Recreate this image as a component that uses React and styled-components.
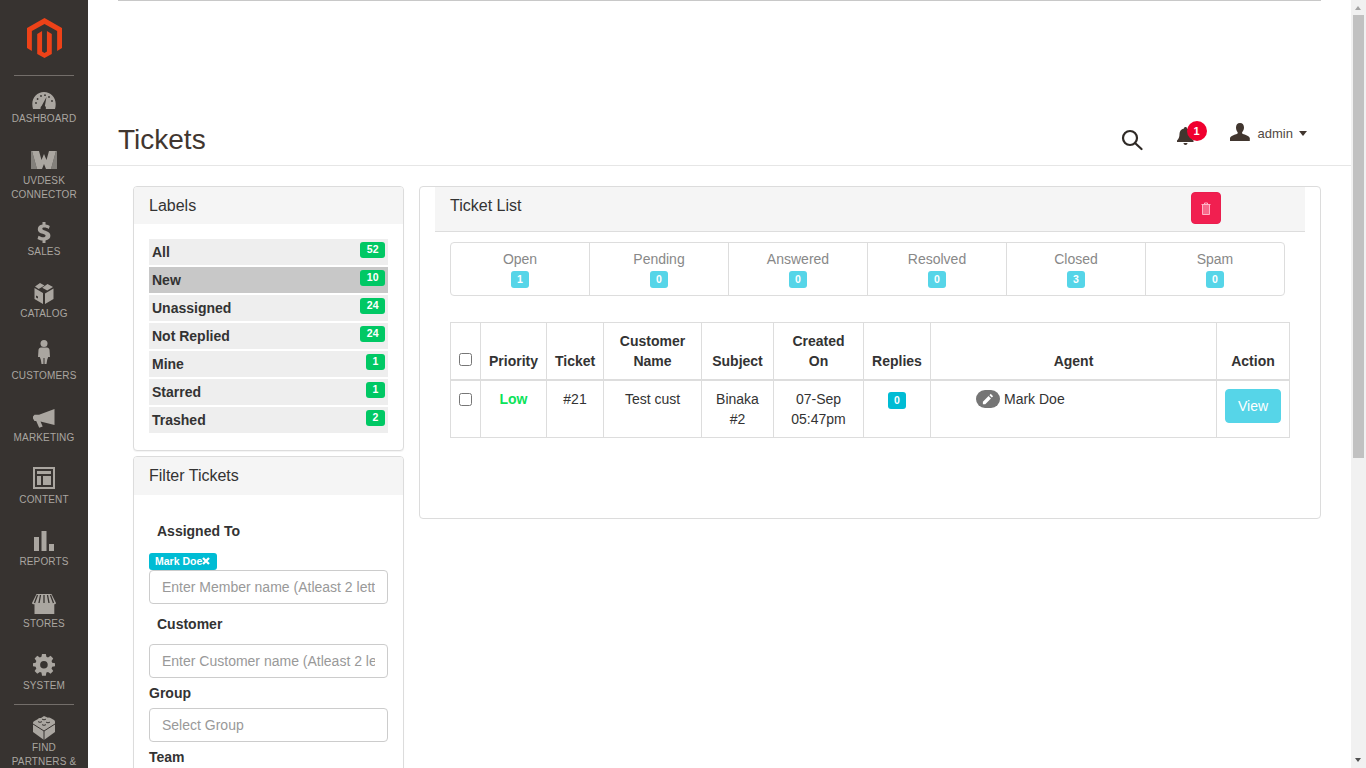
import React from 'react';
import styled, { createGlobalStyle } from 'styled-components';

const Global = createGlobalStyle`
  html, body { margin: 0; padding: 0; height: 768px; overflow: hidden; background: #fff; }
  * { box-sizing: border-box; }
  body { font-family: "Liberation Sans", Arial, sans-serif; font-size: 14px; color: #333; }
`;

const Page = styled.div`display: flex; width: 1366px; height: 768px; overflow: hidden;`;
const Sidebar = styled.nav`
  width: 88px; flex: none; height: 768px; background: #373330; overflow: hidden;
  display: flex; flex-direction: column; align-items: center;
`;
const Logo = styled.div`height: 76px; width: 60px; flex: none; display: flex; justify-content: center; padding-top: 18px; border-bottom: 1px solid #736e6a;`;
const NavItem = styled.a`
  flex: none; width: 88px; display: flex; flex-direction: column; align-items: center;
  height: ${p => p.$h}px; padding-top: ${p => p.$pt}px;
  color: #aaa6a0; font-size: 10px; line-height: 14px; letter-spacing: .15px; text-align: center; text-transform: uppercase;
  font-family: "Liberation Sans", sans-serif;
  svg { display: block; margin-bottom: ${p => p.$gap}px; flex: none; }
`;
const Divider = styled.div`width: 60px; height: 1px; background: #736e6a; flex: none; margin-top: 4px;`;

const Main = styled.main`flex: 1; min-width: 0; height: 768px; overflow: hidden; display: flex; flex-direction: column;`;
const TopRule = styled.div`height: 1px; margin: 0 31px 0 30px; background: #c8c8c8; flex: none;`;
const Header = styled.header`
  height: 165px; flex: none; border-bottom: 1px solid #e6e6e6; display: flex; align-items: flex-start; padding: 121px 0 0 30px; position: relative;
`;
const Title = styled.h1`margin: 0; font-size: 28px; line-height: 36px; font-weight: 400; color: #41362f; flex: 1;`;
const HeadActions = styled.div`display: flex; align-items: flex-start; height: 24px;`;
const SearchWrap = styled.span`display: flex; margin: 7px 0 0 0; width: 22px;`;
const BellWrap = styled.span`position: relative; display: flex; margin: 5px 0 0 34px; width: 19px;`;
const BellBadge = styled.span`
  position: absolute; left: 10px; top: -6px; width: 20px; height: 20px; border-radius: 50%; background: #f0002f; color: #fff;
  font-size: 11px; font-weight: 700; display: flex; align-items: center; justify-content: center;
`;
const UserWrap = styled.span`display: flex; align-items: center; height: 20px; margin: 1px 45px 0 34px; font-size: 13px; color: #514943; gap: 8px; svg { margin-top: -2px; }`;
const Caret = styled.span`width: 0; height: 0; border-left: 4px solid transparent; border-right: 4px solid transparent; border-top: 5px solid #41362f; margin-left: -2px;`;

const Content = styled.div`flex: 1; display: flex; align-items: flex-start; padding: 20px 0 0 45px; gap: 15px;`;
const LeftCol = styled.div`width: 271px; flex: none; display: flex; flex-direction: column; gap: 5px;`;
const Card = styled.section`border: 1px solid #dcdcdc; border-radius: 4px; background: #fff; box-shadow: 0 1px 1px rgba(0,0,0,.05);`;
const CardHead = styled.div`height: ${p => p.$h}px; background: #f5f5f5; padding: 9px 15px 0; font-size: 16px; line-height: 19px; color: #333; border-radius: 3px 3px 0 0;`;
const LabelList = styled.ul`list-style: none; margin: 0; padding: 15px 15px 17px; display: flex; flex-direction: column; gap: 2px;`;
const LabelRow = styled.li`
  height: 26px; background: ${p => p.$active ? '#c8c8c8' : '#eee'}; display: flex; justify-content: space-between; padding: 3px 3px 0 3px;
  font-size: 14px; line-height: 20px; font-weight: 700; color: #333;
`;
const Count = styled.span`
  height: 16px; min-width: 19px; padding: 0 6.5px; background: #00c864; color: #fff; border-radius: 3px; font-size: 10.5px; line-height: 14px; font-weight: 700; text-align: center;
`;
const FilterBody = styled.div`padding: 0 15px; height: 320px;`;
const Indented = styled.div`font-weight: 700; font-size: 14px; line-height: 20px; color: #333; padding: ${p => p.$pt}px 0 0 ${p => p.$pl}px; margin-bottom: ${p => p.$mb}px;`;
const Tag = styled.span`
  display: flex; align-items: center; width: 68px; height: 17px; background: #00bcd4; color: #fff; border-radius: 3px; font-size: 10.5px; font-weight: 700; padding: 0 0 1px 6px;
`;
const Input = styled.input`
  display: block; width: 239px; height: 34px; border: 1px solid #ccc; border-radius: 4px; padding: 6px 12px; font: 14px "Liberation Sans", sans-serif; color: #555; background: #fff;
  &::placeholder { color: #999; opacity: 1; }
`;

const ListCard = styled(Card)`width: 902px; height: 333px; flex: none; padding: 0 15px; box-shadow: none;`;
const ListHead = styled.div`height: 45px; background: #f5f5f5; border-bottom: 1px solid #ddd; display: flex; justify-content: space-between; padding: 9px 84px 0 15px; font-size: 16px; line-height: 19px; color: #333;`;
const DeleteBtn = styled.button`
  width: 30px; height: 32px; margin-top: -4px; padding: 1px 0 0; border: 1px solid #e91e4e; border-radius: 4px; background: #f11f50; display: flex; align-items: center; justify-content: center;
`;
const Stats = styled.div`
  display: grid; grid-template-columns: 138px repeat(5, 139px); width: 835px; height: 54px; margin: 10px 0 26px 15px; border: 1px solid #ddd; border-radius: 4px;
`;
const Stat = styled.div`
  border-left: ${p => p.$first ? 'none' : '1px solid #ddd'}; text-align: center; color: #888; font-size: 14px; line-height: 20px; padding-top: 6px;
  display: flex; flex-direction: column; align-items: center;
`;
const StatBadge = styled.span`width: 18px; height: 17px; background: #56d5e8; border-radius: 3px; color: #fff; font-size: 10.5px; font-weight: 700; line-height: 17px; text-align: center; margin-top: 2px;`;
const Table = styled.table`
  border-collapse: collapse; width: 840px; margin-left: 15px; table-layout: fixed; font-size: 14px; line-height: 20px; color: #333;
  th, td { border: 1px solid #ddd; text-align: center; }
  th { padding: 8px 8px; vertical-align: bottom; font-weight: 700; border-bottom-width: 2px; }
  td { padding: 8px 8px; vertical-align: top; height: 57px; }
`;
const Check = styled.input`width: 13px; height: 13px; margin: 0; display: block; margin-inline: auto; position: relative; top: ${p => p.$top}px; appearance: none; border: 1px solid #767676; border-radius: 2.5px; background: #fff;`;
const Low = styled.span`color: #0be35a; font-weight: 700;`;
const ReplyBadge = styled.span`display: inline-block; width: 18px; height: 17px; background: #00bcd4; border-radius: 3px; color: #fff; font-size: 10.5px; font-weight: 700; line-height: 17px; text-align: center; vertical-align: top; margin-top: 3px;`;
const AgentCell = styled.div`display: flex; align-items: center; gap: 4px; padding-left: 37px; text-align: left;`;
const Pencil = styled.span`width: 24px; height: 18px; border-radius: 9px; background: #757575; display: flex; align-items: center; justify-content: center; flex: none;`;
const ViewBtn = styled.button`width: 56px; height: 34px; border: 1px solid #56d5e8; border-radius: 4px; background: #56d5e8; color: #fff; font: 14px "Liberation Sans", sans-serif; padding: 0; display: block; margin: 0 auto; opacity: 1;`;
const Scrollbar = styled.div`width: 15px; flex: none; margin-left: -1px; background: #f1f1f1; padding: 15px 2px 0; position: relative;`;
const Thumb = styled.div`height: 443px; background: #c1c1c1;`;
const ArrowUp = styled.span`position: absolute; top: 6px; left: 4px; width: 0; height: 0; border-left: 3.5px solid transparent; border-right: 3.5px solid transparent; border-bottom: 4px solid #a3a3a3;`;
const ArrowDown = styled.span`position: absolute; bottom: 6px; left: 4px; width: 0; height: 0; border-left: 3.5px solid transparent; border-right: 3.5px solid transparent; border-top: 4px solid #505050;`;

const ic = '#aaa6a0';
const Dashboard = () => (<svg width="24" height="17" viewBox="0 0 24 17"><path fill={ic} d="M12 0C5.400 0 .3 5.300.3 12c0 1.800.3 3.500.7 5h7.600c-.3-1.200.1-2.400 1-3.100L14.500 5l-1.600 8.700c.9.7 1.300 2 .9 3.300H23c.5-1.500.7-3.200.7-5C23.700 5.300 18.600 0 12 0z"/><g fill="#373330"><circle cx="4" cy="11" r=".9"/><circle cx="5.600" cy="7" r=".9"/><circle cx="9" cy="4" r=".9"/><circle cx="13" cy="3.200" r=".9"/><circle cx="17" cy="5" r=".9"/><circle cx="20" cy="9" r=".9"/></g></svg>);
const UV = () => (<svg width="26" height="18" viewBox="0 0 26 18"><path fill="#83807b" d="M0 0h1l5 18H0zM25 0h1v18h-6z"/><path fill={ic} d="M1 0h7l2.500 9L13 3l2.500 6L18 0h7l-5 18h-5l-2-5-2 5H6z"/></svg>);
const Dollar = () => (<svg width="14" height="21" viewBox="0 0 14 21"><path fill={ic} d="M5.500 0h3v2.500c1.800.2 3.200.7 4.300 1.400l-1 3C10.500 6.100 9 5.500 7.300 5.500c-1.300 0-2 .5-2 1.200 0 .8.900 1.200 3.200 2 3.300 1.100 4.900 2.500 4.900 5 0 2.400-1.700 4.200-4.900 4.700V21h-3v-2.500c-2-.2-3.800-.8-5-1.600l1-3.100c1.400.9 3.100 1.500 4.700 1.500 1.500 0 2.400-.6 2.400-1.500 0-.8-.8-1.300-2.900-2C2.800 11.300.8 9.900.8 7.200.8 4.900 2.500 3 5.500 2.600z"/></svg>);
const Box = () => (<svg width="20" height="21" viewBox="0 0 20 21"><path fill={ic} d="M6 0l4.500 2.600-5.800 3.300L1 3.500zM13.500 1L19 4l-5.800 3.500-5-2.800zM.5 5l8.500 5v11l-8.500-5zM19.500 5.500V16L11 21V10.500zM4 13.500l-2-1v2l2 1z"/></svg>);
const Person = () => (<svg width="12" height="24" viewBox="0 0 12 24"><circle cx="6" cy="3.500" r="3.500" fill={ic}/><path fill={ic} d="M3 7.500h6c1.400 0 2.300 1 2.500 2.300L12 17h-1.800l-1 2.800L8.500 24h-2v-6h-1v6h-2l-.7-4.200L1.800 17H0l.5-7.200C.7 8.500 1.600 7.500 3 7.500z"/></svg>);
const Megaphone = () => (<svg width="22" height="19" viewBox="0 0 22 19"><path fill={ic} d="M21.500 0v16L7.500 12.600l2.200 4.900-3.500 1.300-3-6.800H1.500L0 9.500V7.500l1.500-1.800H6z"/></svg>);
const ContentIc = () => (<svg width="22" height="22" viewBox="0 0 22 22"><path fill={ic} fillRule="evenodd" d="M0 0h22v22H0zM2 2v18h18V2z"/><path fill={ic} d="M4 4h14v3H4zM4 9h4v9H4zM10 9h8v9h-8z"/></svg>);
const Bars = () => (<svg width="20" height="20" viewBox="0 0 20 20"><path fill={ic} d="M0 6h5v14H0zM7.500 0h5v20h-5zM15 13h5v7h-5z"/></svg>);
const Store = () => (<svg width="24" height="20" viewBox="0 0 24 20"><path fill={ic} d="M4.500 0h15L24 9c0 .8-.8 1.300-1.700 1.300V20H2.500V10.300C.8 10.300 0 9.800 0 9z"/><path stroke="#373330" strokeWidth="1.300" fill="none" d="M8.500 1 7 9M12 1v8M15.500 1 17 9M5.500 1 2.500 9M18.500 1l3 8"/></svg>);
const Gear = () => (<svg width="22" height="22" viewBox="0 0 22 22"><path fill={ic} fillRule="evenodd" d="M9 0h4l.6 3.200 1.700.7L18 2.100l2.800 2.800-1.800 2.700.7 1.700L23 10v3l-3.300.7-.7 1.700 1.800 2.700L18 20.900l-2.700-1.800-1.700.7L13 23H9l-.6-3.200-1.700-.7L4 20.900 1.200 18.100 3 15.400l-.7-1.700L-1 13v-3l3.300-.7.700-1.700L1.200 4.900 4 2.100l2.700 1.800 1.700-.7zM11 7.500a4 4 0 1 0 0 8 4 4 0 0 0 0-8z" transform="scale(.95) translate(.5 -.2)"/></svg>);
const Brick = () => (<svg width="22" height="24" viewBox="0 0 22 24"><path fill={ic} d="M11 0l4 1.700c.8-.4 2-.3 2.500.4L21 4c.7.500 1 1 1 1.700V16l-11 8-11-8V7c0-.8.300-1.400 1-1.800l4-2.200C5.500 2 7 1.700 8 2z"/><path stroke="#373330" strokeWidth="1" fill="none" d="M0 8l11 7 11-7M11 15v9M5 5.500c1 1 3 1 4 0M9 3c1 1 3 1 4 0M13 6c1 1 3 1 4 0M9 8.500c1 1 3 1 4 0"/></svg>);
const MageLogo = () => (<svg width="35" height="40" viewBox="0 0 36 41"><path fill="#ed4218" d="M18 0 0 10.300v20.600l5 2.900V13.400L18 6l13 7.400v20.400l5-2.900V10.300z"/><path fill="#ed4218" d="M20.500 34.500 18 36l-2.500-1.500V13.400l-5 2.900v20.700L18 41l7.500-4V16.300l-5-2.900z"/></svg>);

const navItems = [
  { t: ['Dashboard'], I: Dashboard, h: 59, pt: 16, gap: 3 },
  { t: ['Uvdesk', 'Connector'], I: UV, h: 72, pt: 16, gap: 5 },
  { t: ['Sales'], I: Dollar, h: 59, pt: 15, gap: 2 },
  { t: ['Catalog'], I: Box, h: 62, pt: 17, gap: 3 },
  { t: ['Customers'], I: Person, h: 62, pt: 12, gap: 5 },
  { t: ['Marketing'], I: Megaphone, h: 62, pt: 19, gap: 3 },
  { t: ['Content'], I: ContentIc, h: 62, pt: 15, gap: 4 },
  { t: ['Reports'], I: Bars, h: 62, pt: 17, gap: 4 },
  { t: ['Stores'], I: Store, h: 62, pt: 18, gap: 3 },
  { t: ['System'], I: Gear, h: 62, pt: 16, gap: 3 },
];

const labels = [['All', 52], ['New', 10, true], ['Unassigned', 24], ['Not Replied', 24], ['Mine', 1], ['Starred', 1], ['Trashed', 2]];
const stats = [['Open', 1], ['Pending', 0], ['Answered', 0], ['Resolved', 0], ['Closed', 3], ['Spam', 0]];
const cols = [30, 66, 57, 98, 72, 90, 67, 286, 73];

export default function App() {
  return (
    <Page>
      <Global />
      <Sidebar>
        <Logo><MageLogo /></Logo>
        {navItems.map(({ t, I, h, pt, gap }) => (
          <NavItem key={t[0]} $h={h} $pt={pt} $gap={gap}><I />{t.map(l => <span key={l}>{l}</span>)}</NavItem>
        ))}
        <Divider />
        <NavItem $h={70} $pt={11} $gap={1}><Brick /><span>Find</span><span>Partners &amp;</span></NavItem>
      </Sidebar>
      <Main>
        <TopRule />
        <Header>
          <Title>Tickets</Title>
          <HeadActions>
            <SearchWrap>
              <svg width="22" height="22" viewBox="0 0 22 22" fill="none" stroke="#2f2a26" strokeWidth="2.200" strokeLinecap="round"><circle cx="9" cy="9" r="7"/><path d="M14 14l6.500 6"/></svg>
            </SearchWrap>
            <BellWrap>
              <svg width="17" height="18" viewBox="0 0 17 18"><path fill="#41362f" d="M8.500 0c.9 0 1.500.6 1.500 1.400 2.600.7 4 2.800 4 5.600 0 3 .8 5 2.500 6.500V15H0v-1.500C1.700 12 2.500 10 2.500 7c0-2.800 1.400-4.900 4.500-5.600C7 .6 7.600 0 8.500 0zM6.500 16h4c0 1-.9 2-2 2s-2-1-2-2z"/></svg>
              <BellBadge>1</BellBadge>
            </BellWrap>
            <UserWrap>
              <svg width="20" height="18" viewBox="0 0 20 18"><path fill="#41362f" d="M10 0c2.700 0 4 1.900 4 4.500 0 2-1 3.800-1.800 4.700-.3.500-.2 1.200.4 1.500 2.700 1.200 6.400 1.800 7.200 4.300V18H0v-3c.8-2.500 4.500-3.100 7.200-4.300.6-.3.7-1 .4-1.500C6.800 8.300 6 6.500 6 4.500 6 1.900 7.300 0 10 0z"/></svg>
              <span>admin</span>
              <Caret />
            </UserWrap>
          </HeadActions>
        </Header>
        <Content>
          <LeftCol>
            <Card>
              <CardHead $h={37}>Labels</CardHead>
              <LabelList>
                {labels.map(([n, c, a]) => (
                  <LabelRow key={n} $active={a}>{n}<Count>{c}</Count></LabelRow>
                ))}
              </LabelList>
            </Card>
            <Card>
              <CardHead $h={38}>Filter Tickets</CardHead>
              <FilterBody>
                <Indented $pt={26} $pl={8} $mb={12}>Assigned To</Indented>
                <Tag>Mark Doe<svg width="8" height="8" viewBox="0 0 8 8"><path d="M1 1l6 6M7 1L1 7" stroke="#fff" strokeWidth="2.300"/></svg></Tag>
                <Input placeholder="Enter Member name (Atleast 2 letters)" />
                <Indented $pt={10} $pl={8} $mb={10}>Customer</Indented>
                <Input placeholder="Enter Customer name (Atleast 2 letters)" />
                <Indented $pt={5} $pl={0} $mb={5}>Group</Indented>
                <Input placeholder="Select Group" />
                <Indented $pt={5} $pl={0} $mb={0}>Team</Indented>
              </FilterBody>
            </Card>
          </LeftCol>
          <ListCard>
            <ListHead>
              <span>Ticket List</span>
              <DeleteBtn aria-label="Delete">
                <svg width="10" height="13" viewBox="0 0 10 13" fill="none" stroke="#ffb3c6" strokeWidth="1"><path d="M.5 2.500h9M3.500 2.500V1h3v1.500"/><path fill="#ffb3c6" fillOpacity=".5" d="M1.500 2.500v10h7v-10z"/></svg>
              </DeleteBtn>
            </ListHead>
            <Stats>
              {stats.map(([n, c], i) => (
                <Stat key={n} $first={i === 0}>{n}<StatBadge>{c}</StatBadge></Stat>
              ))}
            </Stats>
            <Table>
              <colgroup>{cols.map((w, i) => <col key={i} style={{ width: w }} />)}</colgroup>
              <thead>
                <tr>
                  <th><Check type="checkbox" $top={-5} /></th>
                  <th>Priority</th>
                  <th>Ticket</th>
                  <th>Customer Name</th>
                  <th>Subject</th>
                  <th>Created On</th>
                  <th>Replies</th>
                  <th>Agent</th>
                  <th>Action</th>
                </tr>
              </thead>
              <tbody>
                <tr>
                  <td><Check type="checkbox" $top={4} /></td>
                  <td><Low>Low</Low></td>
                  <td>#21</td>
                  <td>Test cust</td>
                  <td>Binaka #2</td>
                  <td>07-Sep 05:47pm</td>
                  <td><ReplyBadge>0</ReplyBadge></td>
                  <td>
                    <AgentCell>
                      <Pencil><svg width="12" height="12" viewBox="0 0 11 11"><path fill="#fff" d="M8 .8l2.200 2.200-1.200 1.200L6.800 2zM6 2.800 8.200 5 3 10.200H.8V8z"/></svg></Pencil>
                      <span>Mark Doe</span>
                    </AgentCell>
                  </td>
                  <td><ViewBtn>View</ViewBtn></td>
                </tr>
              </tbody>
            </Table>
          </ListCard>
        </Content>
      </Main>
      <Scrollbar><ArrowUp /><Thumb /><ArrowDown /></Scrollbar>
    </Page>
  );
}
